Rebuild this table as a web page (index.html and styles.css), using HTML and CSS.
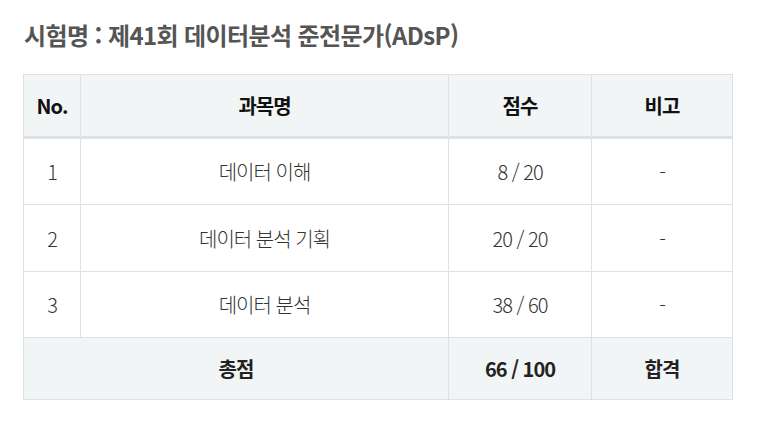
FILE: index.html
```html
<!DOCTYPE html>
<html lang="ko">
<head>
<meta charset="utf-8">
<link rel="stylesheet" href="styles.css">
</head>
<body>
<div class="page">
  <h2 class="title">시험명 : 제41회 데이터분석 준전문가(ADsP)</h2>
  <table class="score">
    <colgroup>
      <col class="c-no"><col class="c-subj"><col class="c-score"><col class="c-note">
    </colgroup>
    <thead>
      <tr><th>No.</th><th>과목명</th><th>점수</th><th>비고</th></tr>
    </thead>
    <tbody>
      <tr><td>1</td><td>데이터 이해</td><td>8 / 20</td><td>-</td></tr>
      <tr><td>2</td><td>데이터 분석 기획</td><td>20 / 20</td><td>-</td></tr>
      <tr><td>3</td><td>데이터 분석</td><td>38 / 60</td><td>-</td></tr>
    </tbody>
    <tfoot>
      <tr><th colspan="2">총점</th><th>66 / 100</th><th>합격</th></tr>
    </tfoot>
  </table>
</div>
</body>
</html>
```
FILE: styles.css
```css
html, body { margin: 0; padding: 0; background: #fff; }
body { font-family: "Noto Sans CJK KR", "Noto Sans", sans-serif; }
.page { padding: 18px 0 0 23px; }
.title {
  margin: 0 0 22px 1px;
  font-size: 24px;
  font-weight: 700;
  color: #555;
  letter-spacing: -0.6px;
  line-height: 34px;
}
.score {
  width: 709px;
  border-collapse: collapse;
  table-layout: fixed;
  font-size: 20px;
  letter-spacing: -1px;
}
.c-no { width: 57px; }
.c-subj { width: 368px; }
.c-score { width: 143px; }
.c-note { width: 141px; }
.score th, .score td {
  border: 1px solid #dde0e5;
  text-align: center;
  padding: 0;
}
.score thead th {
  height: 61px;
  background: #f2f5f6;
  color: #111;
  font-weight: 700;
  border-bottom: 3px solid #dde0e5;
}
.score td {
  height: 65px;
  color: #333;
  font-weight: 300;
}
.score tbody tr:nth-child(2) td {
  height: 66px;
}
.score tfoot th {
  height: 61px;
  background: #f2f5f6;
  color: #222;
  font-weight: 700;
}
```
